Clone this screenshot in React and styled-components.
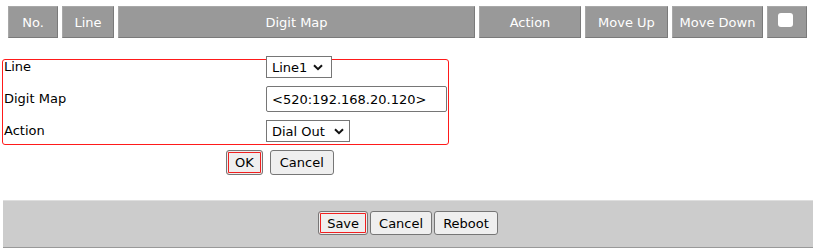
import React from "react";
import styled, { createGlobalStyle } from "styled-components";

const GlobalStyle = createGlobalStyle`
  body {
    margin: 0;
    background: #fff;
    font-family: "DejaVu Sans", Verdana, sans-serif;
    font-size: 13px;
    color: #000;
  }
`;

const Page = styled.div`
  width: 815px;
  padding-top: 6px;
`;

const HeaderRow = styled.div`
  display: flex;
  gap: 4px;
  margin-left: 8px;
`;

const HeadCell = styled.div`
  box-sizing: border-box;
  width: ${(p) => p.$w}px;
  height: 32px;
  display: flex;
  align-items: center;
  justify-content: center;
  background: #999999;
  border: 1px solid;
  border-color: #a8a8a8 #7a7a7a #7a7a7a #a8a8a8;
  color: #fff;
  white-space: nowrap;
`;

const HeadCheck = styled.input`
  appearance: none;
  width: 15px;
  height: 14px;
  margin: 0 4px 5px 0;
  background: #fff;
  border-radius: 3px;
  border: none;
`;

const FormBox = styled.div`
  box-sizing: border-box;
  width: 447px;
  height: 86px;
  margin: 21px 0 0 2px;
  border: 1px solid #ff1a1a;
  border-radius: 3px;
`;

const FieldGrid = styled.div`
  display: grid;
  grid-template-columns: 262px 1fr;
  grid-auto-rows: 32px;
  align-items: center;
  margin: -9px 0 -3px 1px;
`;

const Label = styled.span`
  line-height: 16px;
`;

const SelectWrap = styled.span`
  position: relative;
  display: inline-block;
  vertical-align: middle;

  svg {
    position: absolute;
    right: ${(p) => p.$arrowRight}px;
    top: 8px;
    pointer-events: none;
  }
`;

const Select = styled.select`
  appearance: none;
  box-sizing: border-box;
  width: ${(p) => p.$w}px;
  height: 22px;
  font: inherit;
  color: #000;
  background: #fff;
  border: 1px solid #767676;
  border-radius: 0;
  padding: 0 0 0 5px;
  display: block;
`;

const TextInput = styled.input`
  box-sizing: border-box;
  width: 181px;
  height: 26px;
  font: inherit;
  color: #000;
  border: 1px solid #767676;
  border-radius: 2px;
  padding: 0 5px;
`;

const ButtonRow = styled.div`
  display: flex;
  gap: ${(p) => p.$gap}px;
  justify-content: ${(p) => (p.$center ? "center" : "flex-start")};
  padding-left: ${(p) => p.$indent || 0}px;
`;

const FormActions = styled(ButtonRow)`
  margin-top: 5px;
`;

const Button = styled.button`
  box-sizing: border-box;
  height: ${(p) => p.$h || 25}px;
  padding: 0 ${(p) => p.$pad || 8}px;
  font: inherit;
  color: #000;
  background: #efefef;
  border: 1px solid #767676;
  border-radius: 3px;
  box-shadow: ${(p) =>
    p.$focused ? "inset 0 0 0 1px #efefef, inset 0 0 0 2px #f02020" : "none"};
`;

const Footer = styled.div`
  box-sizing: border-box;
  width: 810px;
  height: 48px;
  margin: 25px 0 0 3px;
  padding-top: 10px;
  background: #cccccc;
  border-top: 1px solid #dedede;
  border-bottom: 1px solid #999999;
`;

const columns = [
  { label: "No.", w: 50 },
  { label: "Line", w: 52 },
  { label: "Digit Map", w: 357 },
  { label: "Action", w: 102 },
  { label: "Move Up", w: 83 },
  { label: "Move Down", w: 91 },
];

const Chevron = () => (
  <svg width="10" height="7" viewBox="0 0 10 7">
    <path d="M1 1.2 L5 5.2 L9 1.2" fill="none" stroke="#111" strokeWidth="2" />
  </svg>
);

const DropDown = ({ width, arrowRight, value, options }) => (
  <SelectWrap $arrowRight={arrowRight}>
    <Select $w={width} defaultValue={value}>
      {options.map((o) => (
        <option key={o}>{o}</option>
      ))}
    </Select>
    <Chevron />
  </SelectWrap>
);

export default function App() {
  return (
    <Page>
      <GlobalStyle />
      <HeaderRow>
        {columns.map((c) => (
          <HeadCell key={c.label} $w={c.w}>
            {c.label}
          </HeadCell>
        ))}
        <HeadCell $w={40}>
          <HeadCheck type="checkbox" />
        </HeadCell>
      </HeaderRow>

      <FormBox>
        <FieldGrid>
          <Label>Line</Label>
          <div>
            <DropDown width={66} arrowRight={9} value="Line1" options={["Line1", "Line2"]} />
          </div>
          <Label>Digit Map</Label>
          <div>
            <TextInput defaultValue="<520:192.168.20.120>" />
          </div>
          <Label>Action</Label>
          <div>
            <DropDown width={84} arrowRight={6} value="Dial Out" options={["Dial Out", "Deny"]} />
          </div>
        </FieldGrid>
      </FormBox>

      <FormActions $gap={7} $indent={226}>
        <Button $focused $pad={8}>OK</Button>
        <Button $pad={9}>Cancel</Button>
      </FormActions>

      <Footer>
        <ButtonRow $gap={2} $center>
          <Button $focused $h={24}>Save</Button>
          <Button $h={24}>Cancel</Button>
          <Button $h={24}>Reboot</Button>
        </ButtonRow>
      </Footer>
    </Page>
  );
}
